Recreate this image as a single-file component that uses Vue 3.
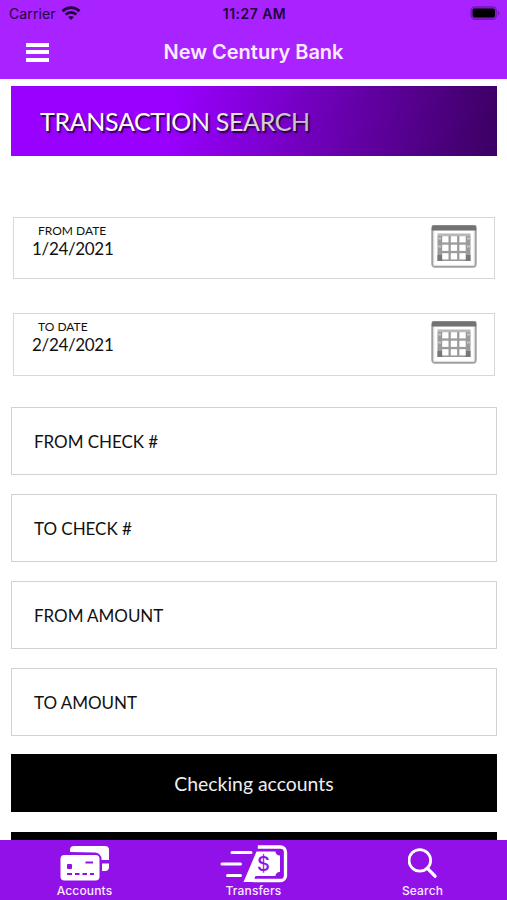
<script setup>
const dates = [
  { label: 'FROM DATE', value: '1/24/2021' },
  { label: 'TO DATE', value: '2/24/2021' },
]
const fields = ['FROM CHECK #', 'TO CHECK #', 'FROM AMOUNT', 'TO AMOUNT']
const gridLines = [0, 1, 2]
</script>

<template>
  <div class="screen">
    <header class="header">
      <div class="status">
        <div class="carrier">
          <span>Carrier</span>
          <svg class="wifi" width="20" height="15" viewBox="0 0 20 15" fill="none" stroke="#22053a" stroke-width="2.8">
            <path d="M1.5 5.2C6.3.5 13.7.5 18.5 5.2" />
            <path d="M4.7 8.5c3-2.9 7.6-2.9 10.6 0" />
            <path d="M7.2 11.1c1.5-1.5 4.1-1.5 5.6 0L10 14z" fill="#22053a" stroke="none" />
          </svg>
        </div>
        <span class="time">11:27 AM</span>
        <svg class="battery" width="32" height="15" viewBox="0 0 32 15">
          <rect x="3" y=".8" width="25.5" height="12.5" rx="4" fill="#8a1bd2" stroke="#7417b5" stroke-width="1.2" />
          <rect x="4.6" y="2.6" width="22.3" height="8.8" rx="2" fill="#000" />
          <path d="M30 5c1.8.8 1.8 3.4 0 4.2z" fill="#6713a3" />
        </svg>
      </div>
      <div class="nav">
        <div class="menu"><i></i><i></i><i></i></div>
        <h1>New Century Bank</h1>
      </div>
    </header>

    <main class="content">
      <div class="banner"><span>TRANSACTION SEARCH</span></div>

      <div class="dates">
        <div v-for="d in dates" :key="d.label" class="date">
          <div class="date-text">
            <span class="date-label">{{ d.label }}</span>
            <span class="date-value">{{ d.value }}</span>
          </div>
          <svg class="calendar" width="46" height="43" viewBox="0 0 46 43">
            <rect x="1.4" y="1.2" width="43.2" height="40.4" rx="2.5" fill="#fff" stroke="#a0a0a0" stroke-width="2.2" />
            <rect x="2.8" y="5" width="40.4" height="35.4" fill="none" stroke="#dedede" stroke-width="1" />
            <path d="M.8 .5h44.400v5H.8z" fill="#737373" />
            <rect x="6.5" y="8.5" width="33" height="2" fill="#b5b5b5" />
            <rect x="6.5" y="10.5" width="33" height="25.5" fill="#9b9b9b" />
            <rect x="6.5" y="30" width="5" height="6" fill="#777" />
            <rect x="34.5" y="30" width="5" height="6" fill="#777" />
            <g v-for="r in gridLines" :key="r">
              <rect v-for="c in gridLines" :key="c" :x="11.2 + c * 8.6" :y="11.2 + r * 8.5" width="6.3" height="6.2" fill="#fff" />
            </g>
            <path d="M6.5 13.500H10M36 13.500h3.500M6.500 21.500H10M36 21.500h3.500" stroke="#c4c4c4" stroke-width="2" />
          </svg>
        </div>
      </div>

      <div class="fields">
        <div v-for="f in fields" :key="f" class="field">{{ f }}</div>
      </div>

      <div class="buttons">
        <div class="button">Checking accounts</div>
        <div class="button"></div>
      </div>
    </main>

    <nav class="tabs">
      <div class="tab">
        <svg width="50" height="36" viewBox="0 0 50 36">
          <path d="M10 6V4a4 4 0 0 1 4-4h31a4 4 0 0 1 4 4v10H41.5v-1a6.5 6.5 0 0 0-6.5-6.5z" fill="#fff" />
          <path d="M42 17.5h7V21a4 4 0 0 1-4 4h-3z" fill="#fff" />
          <rect x=".5" y="9" width="39" height="25.5" rx="4" fill="#fff" />
          <rect x="7" y="18" width="5" height="5" rx="1" fill="#9211e8" />
          <path d="M25.5 16.5h7.5M7 28h5m3 0h4.5m3 0H27m3 0h4" stroke="#9211e8" stroke-width="2" />
        </svg>
        <span>Accounts</span>
      </div>
      <div class="tab">
        <svg width="68" height="38" viewBox="0 0 68 38">
          <path d="M12 7.5H31M2 19h18.5M7.5 30.5h13" stroke="#fff" stroke-width="3" stroke-linecap="round" />
          <path d="M37.800 2H60.500a5 5 0 0 1 5 5v23.500a5 5 0 0 1-5 5H33" fill="none" stroke="#fff" stroke-width="3.3" />
          <path d="M36.500 6.500H55.500a4 4 0 0 0 4.500 4v16.500a4 4 0 0 0-4.500 4H35.500l-2.500 6H23.500z" fill="#fff" />
          <text x="43.500" y="25.5" text-anchor="middle" class="dollar">$</text>
        </svg>
        <span>Transfers</span>
      </div>
      <div class="tab">
        <svg width="30" height="31" viewBox="0 0 30 31" fill="none" stroke="#fff" stroke-width="2.8">
          <circle cx="11.8" cy="12.4" r="10.8" />
          <path d="M19.2 20.2l7.800 8" stroke-width="3.3" stroke-linecap="round" />
        </svg>
        <span>Search</span>
      </div>
    </nav>
  </div>
</template>

<style>
body {
  margin: 0;
  overflow: hidden;
}
</style>

<style scoped>
.screen {
  width: 507px;
  height: 900px;
  display: flex;
  flex-direction: column;
  overflow: hidden;
  background: #fff;
  font-family: Lato, sans-serif;
  color: #111;
}
.screen * {
  box-sizing: border-box;
}
.header {
  flex: none;
  height: 79px;
  background: #a823ff;
  font-family: Inter, sans-serif;
}
.status {
  height: 27px;
  display: grid;
  grid-template-columns: 1fr auto 1fr;
  align-items: center;
  padding: 0 7px 0 9px;
  color: #22053a;
  font-size: 14px;
}
.carrier {
  display: flex;
  align-items: center;
  gap: 5px;
  letter-spacing: 0.1px;
}
.time {
  font-size: 14px;
  font-weight: 600;
  letter-spacing: 0.45px;
}
.battery {
  justify-self: end;
}
.nav {
  height: 50px;
  display: grid;
  grid-template-columns: 1fr auto 1fr;
  align-items: center;
  padding: 0 25.5px;
}
.menu {
  width: 23px;
  display: grid;
  gap: 3.5px;
}
.menu i {
  height: 4px;
  background: #fff;
}
.nav h1 {
  grid-column: 2;
  margin: 0;
  font-size: 20px;
  font-weight: 600;
  letter-spacing: 0;
  color: #fdeaff;
}
.content {
  flex: 1;
  min-height: 0;
  overflow: hidden;
  padding: 7px 10px 0 11px;
}
.banner {
  position: relative;
  height: 69.5px;
  display: flex;
  align-items: center;
  padding-left: 29px;
  background: #90f;
  color: #fff;
  font-size: 25px;
  letter-spacing: -0.36px;
  text-shadow: 1.5px 1.5px 1.5px rgba(0, 0, 0, 0.75);
}
.banner::after {
  content: '';
  position: absolute;
  inset: 0;
  background: linear-gradient(100deg, rgba(0, 0, 0, 0) 33%, rgba(0, 0, 0, 0.6) 98%);
}
.dates {
  display: grid;
  gap: 34px;
  padding: 61px 2px 0;
}
.date {
  height: 62.5px;
  display: flex;
  justify-content: space-between;
  align-items: flex-start;
  padding: 7px 17px 0 18px;
  border: 1.5px solid #d8d8d8;
}
.date-text {
  display: flex;
  flex-direction: column;
  margin-top: -1px;
}
.date-label {
  padding-left: 6px;
  font-size: 12px;
  line-height: 14px;
}
.date-value {
  font-size: 17px;
  letter-spacing: -0.33px;
  line-height: 21px;
}
.fields {
  display: grid;
  gap: 19px;
  padding-top: 31px;
}
.field {
  height: 68px;
  display: flex;
  align-items: center;
  padding: 2px 0 0 22px;
  border: 1px solid #d2d2d2;
  font-size: 17px;
  letter-spacing: -0.04px;
}
.buttons {
  display: grid;
  gap: 20px;
  padding-top: 18.5px;
}
.button {
  height: 58px;
  display: flex;
  align-items: center;
  justify-content: center;
  padding-top: 1px;
  background: #000;
  color: #eee;
  font-size: 19.4px;
}
.tabs {
  flex: none;
  height: 60px;
  display: grid;
  grid-template-columns: repeat(3, 1fr);
  background: #9211e8;
  color: #fbeaff;
  font-family: Inter, sans-serif;
  font-size: 12px;
  font-weight: 500;
  letter-spacing: 0.15px;
}
.tab {
  display: grid;
  grid-template-rows: 43px 15px;
  justify-items: center;
  align-items: center;
  line-height: 15px;
}
.tab svg {
  margin-top: 4px;
}
.dollar {
  font: 500 20px Inter, sans-serif;
  fill: #9211e8;
}
</style>
